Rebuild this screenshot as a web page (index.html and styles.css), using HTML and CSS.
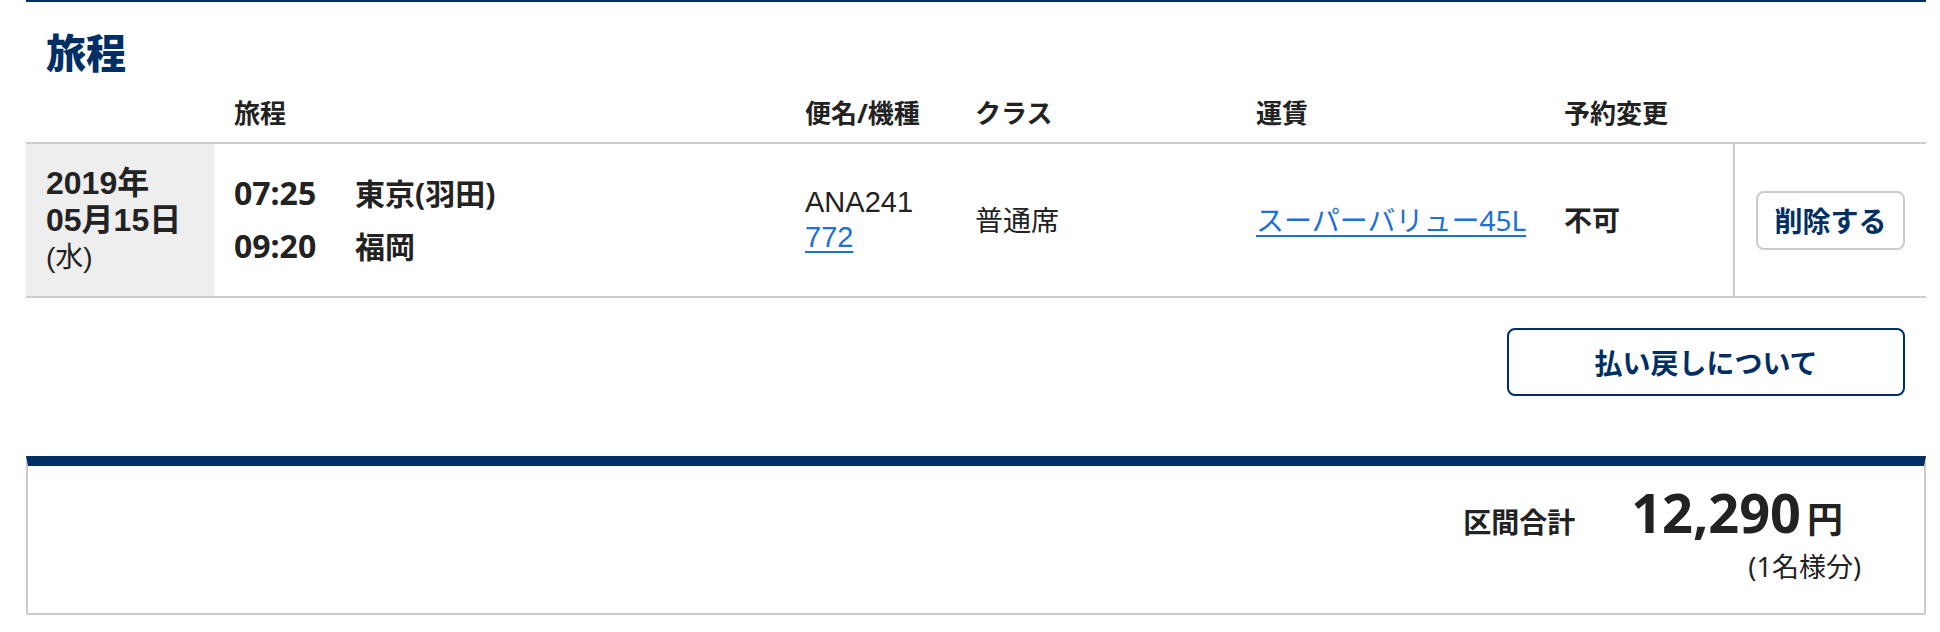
FILE: index.html
```html
<!DOCTYPE html>
<html lang="ja">
<head>
<meta charset="utf-8">
<title>旅程</title>
<link rel="stylesheet" href="styles.css">
</head>
<body>
<div class="page">
  <section class="itinerary">
    <h2 class="title">旅程</h2>
    <div class="grid head">
      <div class="th"></div>
      <div class="th">旅程</div>
      <div class="th">便名/機種</div>
      <div class="th">クラス</div>
      <div class="th">運賃</div>
      <div class="th">予約変更</div>
      <div class="th"></div>
    </div>
    <div class="grid row">
      <div class="cell date">
        <div class="d-strong">2019年</div>
        <div class="d-strong">05月15日</div>
        <div class="d-week">(水)</div>
      </div>
      <div class="cell route">
        <div class="leg"><span class="time">07:25</span><span class="place">東京(羽田)</span></div>
        <div class="leg"><span class="time">09:20</span><span class="place">福岡</span></div>
      </div>
      <div class="cell flight">
        <div class="flight-no">ANA241</div>
        <div><a href="#" class="link">772</a></div>
      </div>
      <div class="cell cls">普通席</div>
      <div class="cell fare"><a href="#" class="link">スーパーバリュー45L</a></div>
      <div class="cell change">不可</div>
      <div class="cell action"><button class="btn-delete" type="button">削除する</button></div>
    </div>
    <div class="refund-wrap">
      <button class="btn-refund" type="button">払い戻しについて</button>
    </div>
  </section>
  <section class="total">
    <div class="total-label">区間合計</div>
    <div class="total-amount">
      <div class="price"><span class="num">12,290</span><span class="yen">円</span></div>
      <div class="note">(1名様分)</div>
    </div>
  </section>
</div>
</body>
</html>
```

FILE: styles.css
```css
html, body {
  margin: 0;
  padding: 0;
  background: #ffffff;
}
body {
  font-family: "Noto Sans", "Noto Sans CJK JP", sans-serif;
  color: #222222;
}
.page {
  margin-left: 26px;
  width: 1900px;
}
.itinerary {
  border-top: 2px solid #002f65;
}
.title {
  margin: 29px 0 0 0;
  padding-left: 20px;
  font-family: "Noto Sans CJK JP", sans-serif;
  font-size: 40px;
  line-height: 40px;
  font-weight: 900;
  color: #002f65;
}
.grid {
  display: grid;
  grid-template-columns: 188px 571px 170px 281px 308px 189px 193px;
}
.head {
  padding-top: 29px;
  border-bottom: 2px solid #cccccc;
}
.th {
  padding-left: 20px;
  padding-bottom: 16px;
  font-size: 26px;
  line-height: 26px;
  font-weight: 700;
}
.row {
  height: 152px;
  border-bottom: 2px solid #cccccc;
}
.cell {
  padding-left: 20px;
  display: flex;
  flex-direction: column;
  justify-content: center;
  font-size: 28px;
  line-height: 36px;
}
.date {
  background: #eeeeee;
  font-family: "Liberation Sans", "Noto Sans CJK JP", sans-serif;
}
.d-strong {
  font-size: 32px;
  line-height: 37px;
  font-weight: 700;
}
.d-week {
  font-size: 28px;
  line-height: 37px;
}
.route {
  gap: 12px;
}
.leg {
  display: flex;
  align-items: baseline;
  line-height: 40px;
  font-weight: 700;
}
.time {
  width: 121px;
  font-size: 32px;
}
.place {
  font-size: 30px;
}
.flight {
  font-family: "Liberation Sans", "Noto Sans CJK JP", sans-serif;
  font-size: 29px;
  line-height: 35px;
}
.link {
  color: #1e6fd6;
  text-decoration: underline;
  text-decoration-thickness: 2px;
  text-underline-offset: 4px;
}
.fare .link {
  font-size: 28px;
}
.change {
  font-weight: 700;
}
.action {
  padding-left: 0;
  border-left: 2px solid #cccccc;
  align-items: center;
}
.btn-delete {
  width: 149px;
  height: 59px;
  padding: 0;
  background: #ffffff;
  border: 2px solid #cccccc;
  border-radius: 8px;
  font-family: "Noto Sans CJK JP", sans-serif;
  font-size: 28px;
  font-weight: 700;
  color: #002f65;
}
.refund-wrap {
  display: flex;
  justify-content: flex-end;
  padding: 30px 21px 0 0;
}
.btn-refund {
  width: 398px;
  height: 68px;
  padding: 0;
  background: #ffffff;
  border: 2px solid #002f65;
  border-radius: 8px;
  font-family: "Noto Sans CJK JP", sans-serif;
  font-size: 28px;
  font-weight: 700;
  color: #002f65;
}
.total {
  margin-top: 60px;
  height: 127px;
  border-top: 10px solid #002f65;
  border-left: 2px solid #cccccc;
  border-right: 2px solid #cccccc;
  border-bottom: 2px solid #cccccc;
  display: flex;
  justify-content: flex-end;
  align-items: baseline;
  padding: 20px 63px 0 0;
  box-sizing: content-box;
}
.total-label {
  font-size: 28px;
  line-height: 52px;
  font-weight: 700;
  margin-right: 56px;
}
.total-amount {
  display: flex;
  flex-direction: column;
  align-items: flex-end;
}
.price {
  padding-right: 18px;
  line-height: 52px;
  font-weight: 700;
}
.num {
  font-size: 54px;
}
.yen {
  font-size: 36px;
  margin-left: 6px;
}
.note {
  margin-top: -4px;
  font-size: 27px;
  line-height: 36px;
}
```
